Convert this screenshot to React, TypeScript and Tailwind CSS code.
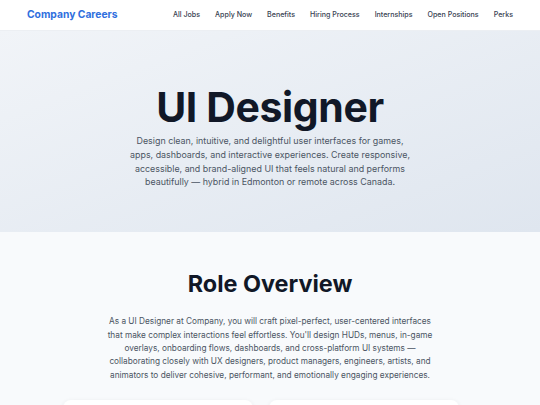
import { } from 'react';

const navLinks = ['All Jobs', 'Apply Now', 'Benefits', 'Hiring Process', 'Internships', 'Open Positions', 'Perks'];

function Navbar() {
  return (
    <header className="h-[31px] bg-white border-b border-[#eceff3] flex items-center justify-between px-[27px]">
      <a className="text-[10.3px] font-bold text-[#2f6fde]">Company Careers</a>
      <nav className="flex items-center gap-[15px]">
        {navLinks.map((link) => (
          <a key={link} className="text-[7.1px] font-medium text-[#374151]">
            {link}
          </a>
        ))}
      </nav>
    </header>
  );
}

function Hero() {
  return (
    <section className="h-[201px] bg-gradient-to-br from-[#f1f4f8] to-[#dfe6ef] flex flex-col items-center pt-[56px]">
      <h1 className="text-[41px] leading-none font-bold text-[#111827] tracking-[-0.4px]">UI Designer</h1>
      <p className="mt-[6px] w-[280px] text-center text-[8.9px] leading-[13.8px] text-[#4b5563]">
        Design clean, intuitive, and delightful user interfaces for games, apps, dashboards, and interactive
        experiences. Create responsive, accessible, and brand-aligned UI that feels natural and performs
        beautifully — hybrid in Edmonton or remote across Canada.
      </p>
    </section>
  );
}

function Overview() {
  return (
    <section className="bg-[#f8fafc] flex flex-col items-center pt-[40px]">
      <h2 className="text-[23.4px] leading-none font-bold text-[#111827]">Role Overview</h2>
      <p className="mt-[20px] w-[338px] text-center text-[8.25px] leading-[13.3px] text-[#4b5563]">
        As a UI Designer at Company, you will craft pixel-perfect, user-centered interfaces that make complex
        interactions feel effortless. You'll design HUDs, menus, in-game overlays, onboarding flows, dashboards,
        and cross-platform UI systems — collaborating closely with UX designers, product managers, engineers,
        artists, and animators to deliver cohesive, performant, and emotionally engaging experiences.
      </p>
      <div className="mt-[18px] w-[414px] grid grid-cols-[190px_190px] gap-[16px]">
        <div className="h-[80px] bg-white rounded-[8px] shadow-[0_1px_5px_rgba(15,23,42,0.07)]" />
        <div className="h-[80px] bg-white rounded-[8px] shadow-[0_1px_5px_rgba(15,23,42,0.07)]" />
      </div>
    </section>
  );
}

export default function App() {
  return (
    <div className="min-h-screen bg-[#f8fafc] font-['Inter',sans-serif]">
      <Navbar />
      <Hero />
      <Overview />
    </div>
  );
}
